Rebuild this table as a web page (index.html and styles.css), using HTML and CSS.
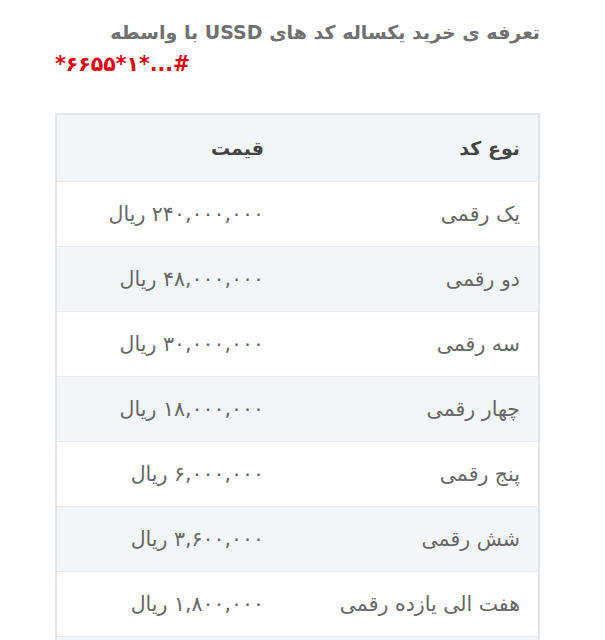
FILE: index.html
```html
<!DOCTYPE html>
<html lang="fa" dir="rtl">
<head>
<meta charset="utf-8">
<link rel="stylesheet" href="styles.css">
</head>
<body>
<div class="wrap">
  <h2 class="title">تعرفه ی خرید یکساله کد های USSD با واسطه</h2>
  <div class="code"><span dir="ltr">*۶۶۵۵*۱*...#</span></div>
  <table class="prices">
    <colgroup><col class="c-type"><col class="c-price"></colgroup>
    <thead>
      <tr><th>نوع کد</th><th>قیمت</th></tr>
    </thead>
    <tbody>
      <tr><td>یک رقمی</td><td>۲۴۰,۰۰۰,۰۰۰ ریال</td></tr>
      <tr><td>دو رقمی</td><td>۴۸,۰۰۰,۰۰۰ ریال</td></tr>
      <tr><td>سه رقمی</td><td>۳۰,۰۰۰,۰۰۰ ریال</td></tr>
      <tr><td>چهار رقمی</td><td>۱۸,۰۰۰,۰۰۰ ریال</td></tr>
      <tr><td>پنج رقمی</td><td>۶,۰۰۰,۰۰۰ ریال</td></tr>
      <tr><td>شش رقمی</td><td>۳,۶۰۰,۰۰۰ ریال</td></tr>
      <tr><td>هفت الی یازده رقمی</td><td>۱,۸۰۰,۰۰۰ ریال</td></tr>
      <tr><td>&nbsp;</td><td>&nbsp;</td></tr>
    </tbody>
  </table>
</div>
</body>
</html>
```

FILE: styles.css
```css
html, body {
  margin: 0;
  padding: 0;
  background: #fff;
}
body {
  font-family: "DejaVu Sans", "Noto Sans", sans-serif;
}
.wrap {
  padding: 17px 65px 0 55px;
}
.title {
  margin: 0;
  font-size: 19px;
  font-weight: bold;
  color: #707070;
  line-height: 30px;
  text-align: right;
}
.code {
  text-align: left;
  color: #e3000f;
  font-weight: bold;
  font-size: 20.5px;
  line-height: 28px;
  margin-top: 3px;
  margin-bottom: 35px;
}
.prices {
  width: 100%;
  border-collapse: collapse;
  table-layout: fixed;
  border: 2px solid #e3e6e9;
}
.c-type { width: 257px; }
.prices th, .prices td {
  text-align: right;
  padding: 0 18px;
  border-bottom: 1px solid #e8ecef;
}
.prices th {
  height: 66px;
  background: #f3f6f9;
  color: #444;
  font-weight: bold;
  font-size: 19px;
}
.prices td {
  height: 64px;
  color: #666;
  font-size: 20.5px;
}
.prices tbody tr:nth-child(even) td {
  background: #f3f6f9;
}
```
